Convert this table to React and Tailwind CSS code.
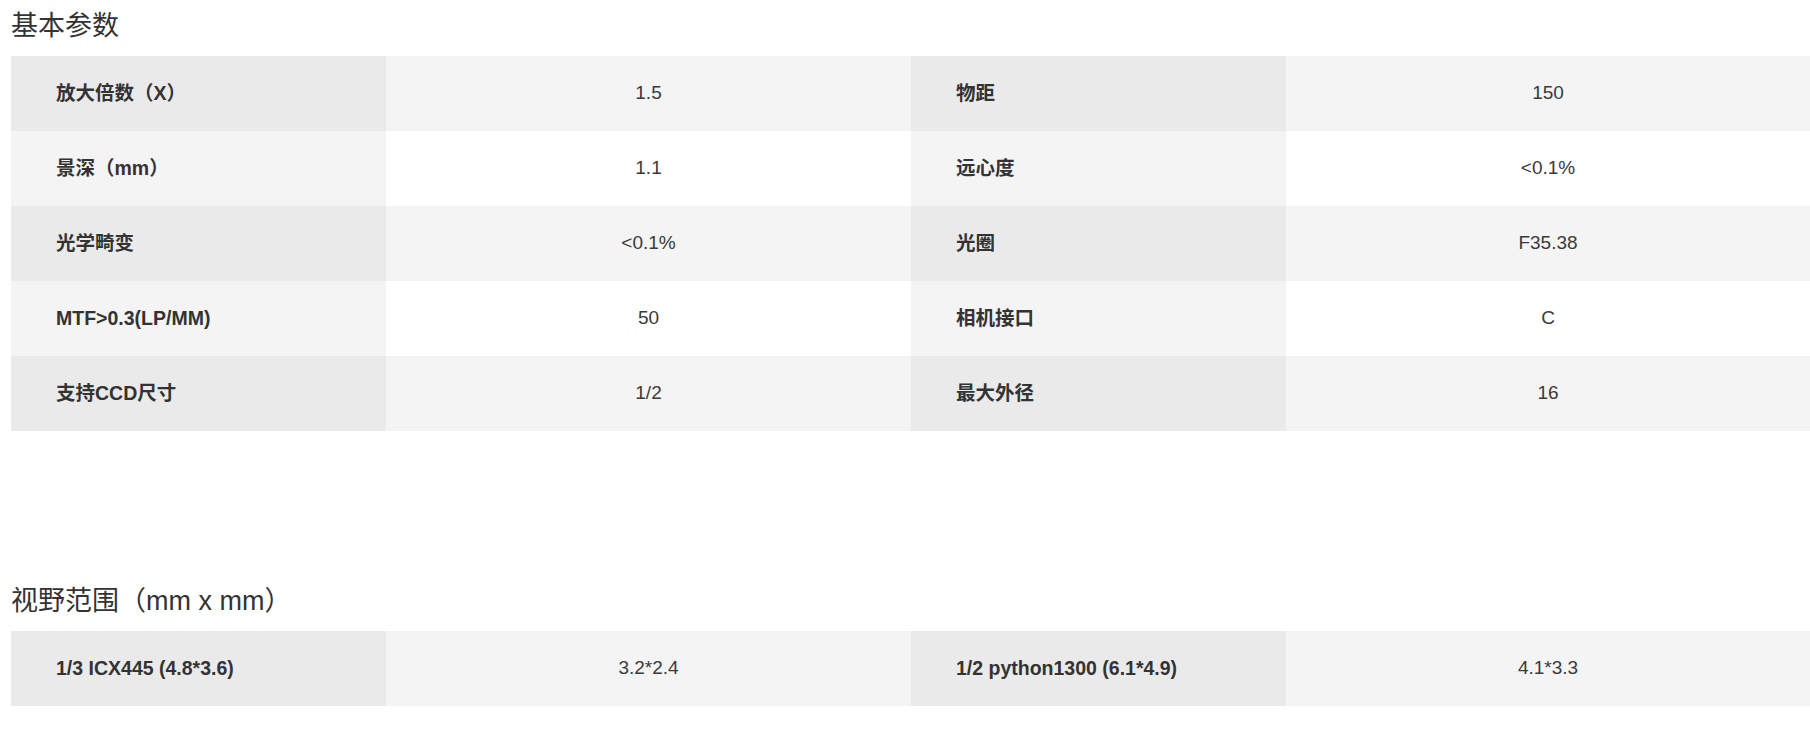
const basic = [
  ["放大倍数（X）", "1.5", "物距", "150"],
  ["景深（mm）", "1.1", "远心度", "<0.1%"],
  ["光学畸变", "<0.1%", "光圈", "F35.38"],
  ["MTF>0.3(LP/MM)", "50", "相机接口", "C"],
  ["支持CCD尺寸", "1/2", "最大外径", "16"],
];

const fov = [["1/3 ICX445 (4.8*3.6)", "3.2*2.4", "1/2 python1300 (6.1*4.9)", "4.1*3.3"]];

function ParamTable({ rows }) {
  return (
    <div className="flex flex-col">
      {rows.map((row, i) => {
        const odd = i % 2 === 0;
        const dark = odd ? "bg-[#eaeaea]" : "bg-[#f4f4f4]";
        const light = odd ? "bg-[#f4f4f4]" : "bg-white";
        return (
          <div key={i} className="grid grid-cols-[375px_525px_375px_1fr] h-[75px] text-[#333]">
            <div className={`${dark} flex items-center pl-[45px] font-bold text-[19.5px]`}>{row[0]}</div>
            <div className={`${light} flex items-center justify-center text-[19px] text-[#3a3a3a]`}>{row[1]}</div>
            <div className={`${dark} flex items-center pl-[45px] font-bold text-[19.5px]`}>{row[2]}</div>
            <div className={`${light} flex items-center justify-center text-[19px] text-[#3a3a3a]`}>{row[3]}</div>
          </div>
        );
      })}
    </div>
  );
}

export default function App() {
  return (
    <div
      className="w-full min-h-[730px] bg-white pl-[11px]"
      style={{ fontFamily: '"Liberation Sans", Arial, "Noto Sans CJK SC", sans-serif' }}
    >
      <h2 className="text-[27px] leading-[36px] text-[#333] font-normal pt-[8px] mb-[12px]">基本参数</h2>
      <ParamTable rows={basic} />

      <h2 className="text-[27px] leading-[36px] text-[#333] font-normal mt-[152px] mb-[12px]">视野范围（mm x mm）</h2>
      <ParamTable rows={fov} />
    </div>
  );
}
